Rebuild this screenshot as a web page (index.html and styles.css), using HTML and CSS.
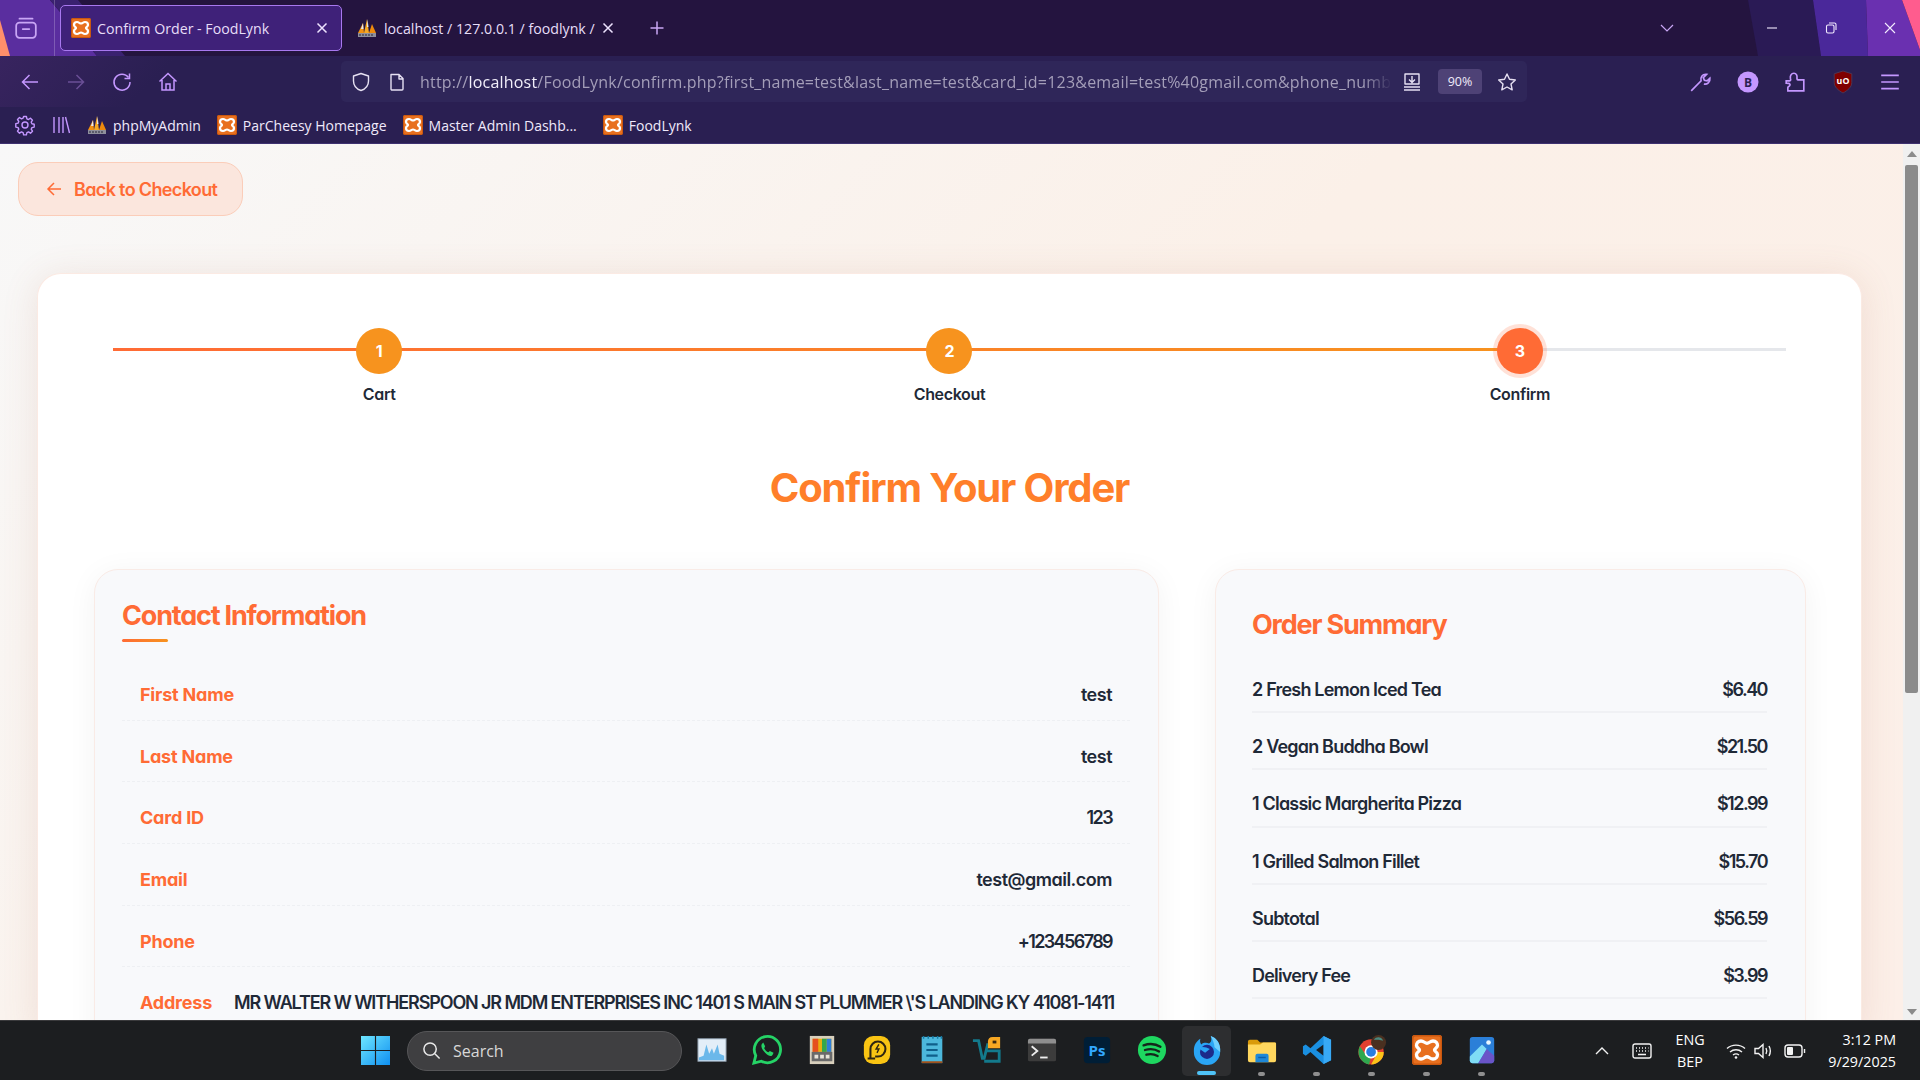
FILE: index.html
```html
<!DOCTYPE html>
<html lang="en">
<head>
<meta charset="utf-8">
<title>Confirm Order - FoodLynk</title>
<link rel="stylesheet" href="styles.css">
</head>
<body>
<svg class="defs" width="0" height="0" aria-hidden="true">
  <symbol id="xampp" viewBox="0 0 20 20">
    <rect width="20" height="20" rx="2" fill="#e8701f"/>
    <rect x=".5" y=".5" width="19" height="19" rx="1.600" fill="none" stroke="#c9570f"/>
    <path d="M6 4C8 4 8.500 5.500 10 5.500S12 4 14 4 17 5.500 17 7 15 9 15 10 17 11.500 17 13 16 16 14 16 11.500 14.500 10 14.500 8 16 6 16 3 14.500 3 13 5 11 5 10 3 8.500 3 7 4 4 6 4Z" fill="none" stroke="#fff" stroke-width="2.200"/>
  </symbol>
  <symbol id="pma" viewBox="0 0 20 20">
    <path d="M1 15 6 5l1 10z" fill="#f29111"/><path d="M7 15 10 1l2 14z" fill="#f7a823"/><path d="M12 15l3-9 4 9z" fill="#ee8a0c"/>
    <path d="M4 11 6 5l.5 6zM10 9l.5-8 1 8z" fill="#e8e8ee"/>
    <rect x="1" y="15" width="18" height="4" fill="#8f8f9c"/>
    <path d="M3 16v2M6 16v2M9 16v2M12 16v2M15 16v2" stroke="#39394a" stroke-width="1.200"/>
  </symbol>
</svg>

<header class="chrome">
  <svg class="theme-art" viewBox="0 0 1920 56" aria-hidden="true">
    <rect width="1920" height="56" fill="#24143f"/>
    <path d="M0 0H50L97 56H0z" fill="#5a2e9f"/>
    <path d="M50 0H78L125 56H97z" fill="#3a2170"/>
    <path d="M0 20 10 56H0z" fill="#ff8f6b"/>
    <path d="M1748 0H1813L1821 56H1758z" fill="#2a1a55"/>
    <path d="M1813 0H1866L1868 56H1821z" fill="#4a289a"/>
    <path d="M1866 0H1902L1920 50V56H1868z" fill="#6a30b0"/>
    <path d="M1902 0H1920V50z" fill="#ff5c8e"/>
  </svg>

  <div class="tabbar">
    <span class="tb-btn side-btn"><svg viewBox="0 0 22 22" class="ico-22"><rect x="2" y="6" width="18" height="14" rx="3"/><path d="M5 2.500h12M8 12h6"/></svg></span>
    <span class="tab-sep"></span>
    <div class="tab tab-active">
      <svg class="fav"><use href="#xampp"/></svg>
      <span class="tab-title">Confirm Order - FoodLynk</span>
      <svg class="tab-x" viewBox="0 0 12 12"><path d="M1.500 1.500l9 9M10.500 1.500l-9 9"/></svg>
    </div>
    <div class="tab tab-idle">
      <svg class="fav"><use href="#pma"/></svg>
      <span class="tab-title">localhost / 127.0.0.1 / foodlynk /</span>
      <svg class="tab-x" viewBox="0 0 12 12"><path d="M1.500 1.500l9 9M10.500 1.500l-9 9"/></svg>
    </div>
    <svg class="tab-plus" viewBox="0 0 16 16"><path d="M8 1.500v13M1.500 8h13"/></svg>
    <svg class="tab-more" viewBox="0 0 14 8"><path d="M1 1l6 6 6-6"/></svg>
    <div class="winctl">
      <svg viewBox="0 0 12 12"><path d="M1 6h10"/></svg>
      <svg viewBox="0 0 12 12"><rect x="1.500" y="3" width="7.500" height="8" rx="1.500"/><path d="M4 1h5.500A1.500 1.500 0 0 1 11 2.500V8"/></svg>
      <svg viewBox="0 0 12 12"><path d="M1 1l10 10M11 1L1 11"/></svg>
    </div>
  </div>

  <div class="toolbar">
    <div class="nav">
      <svg viewBox="0 0 20 20"><path d="M18 10H2.500M9.500 3l-7 7 7 7"/></svg>
      <svg viewBox="0 0 20 20" class="dim"><path d="M2 10h15.500M10.500 3l7 7-7 7"/></svg>
      <svg viewBox="0 0 20 20"><path d="M16.500 5.500A8 8 0 1 0 18 10"/><path d="M17.500 1.500v5h-5" class="solid"/></svg>
      <svg viewBox="0 0 20 20"><path d="M1.500 9.500 10 1.500l8.500 8M4 8v10h12V8M8 18v-6h4v6"/></svg>
    </div>
    <div class="urlbar">
      <svg class="u-ico" viewBox="0 0 20 20"><path d="M10 1.500 17.500 4v5c0 4.500-3 8-7.500 9.500C5.500 17 2.500 13.500 2.500 9V4z"/></svg>
      <svg class="u-ico" viewBox="0 0 20 20"><path d="M4 2.500h8l4 4V17a1 1 0 0 1-1 1H5a1 1 0 0 1-1-1zM12 2.500V7h4"/></svg>
      <span class="url"><span>http://</span><b>localhost</b><span>/FoodLynk/confirm.php?first_name=test&amp;last_name=test&amp;card_id=123&amp;email=test%40gmail.com&amp;phone_numb</span></span>
      <svg class="u-ico" viewBox="0 0 20 20"><path d="M3 2h14v10H3zM10 4v6M7 7.500l3 3 3-3M2 15h16M2 18h16"/></svg>
      <span class="zoom-badge">90%</span>
      <svg class="u-ico" viewBox="0 0 20 20"><path d="M10 2l2.500 5.300 5.800.7-4.300 4 1.200 5.800L10 15l-5.200 2.800L6 12 1.700 8l5.800-.7z"/></svg>
    </div>
    <div class="tools">
      <svg viewBox="0 0 20 20"><path d="M2 18l9-9c-1-3 1-6.500 5-6l-3 3 1 2.500 2.500.5 2.500-2.500c.5 3.500-2.500 6-5.500 5.300" /></svg>
      <svg viewBox="0 0 22 22"><circle cx="11" cy="11" r="10.500" class="fill"/><text x="11" y="15.500" class="b-letter">B</text></svg>
      <svg viewBox="0 0 20 20"><path d="M2 9h3c1.500 0 1-1.500.8-2.500C5.500 4.500 6.500 2 9 2s3 2.500 2.800 4c-.1 1 0 2 1 2H18v10H3.500v-3c0-1 2-1 2-2.500S4 11 2 11z"/></svg>
      <svg viewBox="0 0 20 20" class="ublock"><path d="M10 0l8 2.500v8c0 4-3.500 7-8 9.500-4.500-2.500-8-5.500-8-9.500v-8z"/><text x="10" y="12">uO</text></svg>
      <svg viewBox="0 0 20 20"><path d="M2 4h16M2 10h16M2 16h16"/></svg>
    </div>
  </div>

  <div class="bookmarks">
    <svg class="bm-tool" viewBox="0 0 20 20"><circle cx="10" cy="10" r="3"/><path d="M8.600 1.500h2.800l.5 2.300 1.600.7 2-1.300 2 2-1.300 2 .7 1.600 2.300.5v2.800l-2.300.5-.7 1.600 1.300 2-2 2-2-1.300-1.600.7-.5 2.300H8.600l-.5-2.300-1.600-.7-2 1.300-2-2 1.300-2-.7-1.600-2.300-.5V8.600l2.300-.5.7-1.600-1.300-2 2-2 2 1.300 1.600-.7z"/></svg>
    <svg class="bm-tool lib" viewBox="0 0 20 20"><path d="M3 2v16M8 2v16M12 2v16M14.500 2l4 16"/></svg>
    <span class="bm bm-a"><svg class="fav"><use href="#pma"/></svg>phpMyAdmin</span>
    <span class="bm"><svg class="fav"><use href="#xampp"/></svg>ParCheesy Homepage</span>
    <span class="bm bm-c"><svg class="fav"><use href="#xampp"/></svg>Master Admin Dashb...</span>
    <span class="bm"><svg class="fav"><use href="#xampp"/></svg>FoodLynk</span>
  </div>
</header>

<div class="viewport">
  <main class="page">
    <a class="back"><svg viewBox="0 0 16 16"><path d="M15 8H2M8 2 2 8l6 6"/></svg>Back to Checkout</a>
    <section class="card">
      <div class="stepper">
        <span class="line"></span>
        <span class="line-fill"></span>
        <div class="step"><span class="dot">1</span><span class="step-label">Cart</span></div>
        <div class="step"><span class="dot">2</span><span class="step-label">Checkout</span></div>
        <div class="step"><span class="dot dot-now">3</span><span class="step-label">Confirm</span></div>
      </div>
      <h1 class="title">Confirm Your Order</h1>
      <div class="columns">
        <div class="panel contact">
          <h2 class="contact-title">Contact Information</h2>
          <div class="row"><span class="k">First Name</span><span class="v">test</span></div>
          <div class="row"><span class="k">Last Name</span><span class="v">test</span></div>
          <div class="row"><span class="k">Card ID</span><span class="v tight">123</span></div>
          <div class="row"><span class="k">Email</span><span class="v">test@gmail.com</span></div>
          <div class="row"><span class="k">Phone</span><span class="v tight">+123456789</span></div>
          <div class="row"><span class="k">Address</span><span class="v caps">MR WALTER W WITHERSPOON JR MDM ENTERPRISES INC 1401 S MAIN ST PLUMMER \'S LANDING KY 41081-1411</span></div>
        </div>
        <div class="panel summary">
          <h2 class="summary-title">Order Summary</h2>
          <div class="line-item"><span>2 Fresh Lemon Iced Tea</span><span class="price">$6.40</span></div>
          <div class="line-item"><span>2 Vegan Buddha Bowl</span><span class="price">$21.50</span></div>
          <div class="line-item"><span>1 Classic Margherita Pizza</span><span class="price">$12.99</span></div>
          <div class="line-item"><span>1 Grilled Salmon Fillet</span><span class="price">$15.70</span></div>
          <div class="line-item"><span>Subtotal</span><span class="price">$56.59</span></div>
          <div class="line-item"><span>Delivery Fee</span><span class="price">$3.99</span></div>
        </div>
      </div>
    </section>
  </main>
  <div class="scrollbar">
    <span class="sb-up"></span>
    <span class="sb-thumb"></span>
    <span class="sb-down"></span>
  </div>
</div>

<footer class="taskbar">
  <svg class="win" viewBox="0 0 30 30"><defs><linearGradient id="wg" x1="0" y1="0" x2="1" y2="1"><stop offset="0" stop-color="#6ee6ff"/><stop offset="1" stop-color="#0f8ff0"/></linearGradient></defs><path d="M0 0h14.400v14.400H0zM15.600 0H30v14.400H15.600zM0 15.600h14.400V30H0zM15.600 15.600H30V30H15.600z" fill="url(#wg)"/></svg>
  <div class="search"><svg viewBox="0 0 20 20"><circle cx="8.500" cy="8.500" r="6.500"/><path d="M13.500 13.500l5 5"/></svg><span>Search</span></div>
  <div class="apps">
    <span class="app"><svg viewBox="0 0 32 32"><rect x="1" y="4" width="30" height="24" fill="#e3eef8" stroke="#8a99a8"/><path d="M2 24 7 22l3-12 3 10 3-6 2 6 4-10 2 10 5 2v5H2z" fill="#6bb8ea"/></svg></span>
    <span class="app"><svg viewBox="0 0 32 32"><path d="M2 30l2-8A14 14 0 1 1 10 28z" fill="none" stroke="#25d366" stroke-width="3"/><path d="M11 9c-2 2-1 6 3 10s7 4 8 2l1-2-4-2-1.500 1.500c-2-1-3.500-2.500-4.500-4.500L14 12l-2-4z" fill="#25d366"/></svg></span>
    <span class="app"><svg viewBox="0 0 32 32"><rect x="3" y="1" width="26" height="30" fill="#d8d0bd"/><rect x="6" y="4" width="20" height="14" fill="#e8b010"/><rect x="6" y="4" width="6" height="14" fill="#e5501f"/><rect x="16" y="4" width="5" height="14" fill="#35a84a"/><rect x="21" y="4" width="5" height="14" fill="#2f7fd8"/><rect x="5" y="18" width="22" height="10" fill="#6a6a6a"/><path d="M8 21h4v4H8zM14 21h4v4h-4zM20 21h4v4h-4z" fill="#e8e4da"/></svg></span>
    <span class="app"><svg viewBox="0 0 32 32"><rect x="2" y="1" width="28" height="30" rx="10" fill="#f9c413"/><path d="M9 25V15a8 8 0 1 1 8 8h-3M6 25h8" fill="none" stroke="#2e2412" stroke-width="2.200"/><path d="M18 10l-3 5h3l-2 4" fill="none" stroke="#2e2412" stroke-width="1.500"/></svg></span>
    <span class="app"><svg viewBox="0 0 32 32"><rect x="5" y="2" width="22" height="28" fill="#4cb8dc"/><rect x="5" y="28" width="22" height="2" fill="#a0521c"/><path d="M10 10h12M10 16h12M10 22h12" stroke="#0f5f8a" stroke-width="2.200"/><path d="M7 1v3M12 1v3M17 1v3M22 1v3M26 1v3" stroke="#157aa5" stroke-width="1.500"/></svg></span>
    <span class="app"><svg viewBox="0 0 32 32"><path d="M1 6H7L11 25H13L17 9" fill="none" stroke="#137a8c" stroke-width="3"/><path d="M15 17H29V28H13" fill="none" stroke="#137a8c" stroke-width="3"/><path d="M17 14V7Q17 2 22 2H30V14z" fill="#f7a823"/><rect x="22" y="6" width="4" height="3" fill="#3a2a10"/></svg></span>
    <span class="app"><svg viewBox="0 0 32 32"><rect x="1" y="4" width="30" height="24" rx="2" fill="#3c3c3c"/><path d="M1 6a2 2 0 0 1 2-2h26a2 2 0 0 1 2 2v3H1z" fill="#8f8f8f"/><path d="M5 12l6 5-6 5" fill="none" stroke="#eee" stroke-width="2"/><path d="M14 24h8" stroke="#eee" stroke-width="2"/></svg></span>
    <span class="app"><svg viewBox="0 0 32 32"><rect x="2" y="2" width="28" height="28" rx="4" fill="#001e36"/><text x="16" y="22.500" class="ps">Ps</text></svg></span>
    <span class="app"><svg viewBox="0 0 32 32"><circle cx="16" cy="16" r="15" fill="#1ed760"/><path d="M7 11c6-2 13-1.500 18 1.500M8.500 16c5-1.500 11-1 15 1.500M10 21c4-1 8.500-.6 12 1.300" fill="none" stroke="#14261b" stroke-width="2.500" stroke-linecap="round"/></svg></span>
    <span class="app app-on"><svg viewBox="0 0 32 32"><path d="M2 16C2 11 5 6 9 4c-1 3 0 5 1 6 2-2 6-2 8-1 3-1 3-5 2-8 6 2 11 8 10 17a14 14 0 0 1-28 0z" fill="#2aa5f5"/><path d="M20 1c6 2 11 8 10 17l-6-5c0-4-2-8-4-12z" fill="#6fd0ff"/><circle cx="16" cy="18" r="7.500" fill="#1c2a8a"/><path d="M7 14c4-2 8-1 12 1l-5 4z" fill="#2aa5f5"/></svg></span>
    <span class="app"><svg viewBox="0 0 32 32"><path d="M1 7a2 2 0 0 1 2-2h8l3 3h16v4H1z" fill="#d99a0b"/><path d="M1 10h13l3-2h13a1 1 0 0 1 1 1v18a2 2 0 0 1-2 2H3a2 2 0 0 1-2-2z" fill="#ffd75e"/><path d="M9 29v-7a2 2 0 0 1 2-2h10a2 2 0 0 1 2 2v7z" fill="#1e88d8"/><path d="M12 24h8" stroke="#0b5fa8" stroke-width="1.500"/></svg></span>
    <span class="app"><svg viewBox="0 0 32 32"><path d="M23 1 31 5V27L23 31 9 18 4 22 1 20V12L4 10 9 14zM23 10 15 16l8 6z" fill="#1a8fe0"/><path d="M23 1 31 5V27L23 31z" fill="#38a9f5"/></svg></span>
    <span class="app"><svg viewBox="0 0 32 32"><circle cx="15" cy="18" r="13.500" fill="#e3402f"/><path d="M15 18h13.500A13.500 13.500 0 0 1 15 31.500l5-9z" fill="#fcc419"/><path d="M3 12l7 10h5l-2 9.400A13.500 13.500 0 0 1 3 12z" fill="#2fa84f"/><circle cx="15" cy="18" r="7" fill="#fff"/><circle cx="15" cy="18" r="5.200" fill="#2a7de1"/><circle cx="23" cy="8" r="8" fill="#4a3020"/><path d="M18 5c3-4 8-3 10 1-3-1-7-1-10-1z" fill="#4a8a80"/></svg></span>
    <span class="app"><svg viewBox="0 0 32 32"><use href="#xampp"/></svg></span>
    <span class="app"><svg viewBox="0 0 32 32"><rect x="3" y="2" width="26" height="28" rx="3" fill="#2b7fd8"/><path d="M3 23 16 10l5 5-9 15H6a3 3 0 0 1-3-3z" fill="#7fdcf5"/><path d="M12 30l9-15 8 7v5a3 3 0 0 1-3 3z" fill="#6a54c8"/><circle cx="23" cy="8" r="2.500" fill="#e9f7ff"/></svg></span>
  </div>
  <div class="tray">
    <svg class="t-chev" viewBox="0 0 14 8"><path d="M1 7l6-6 6 6"/></svg>
    <svg class="t-kb" viewBox="0 0 20 16"><rect x="1" y="1" width="18" height="14" rx="2"/><path d="M4 5h1M7 5h1M10 5h1M13 5h1M16 5h.5M4 8h1M7 8h1M10 8h1M13 8h1M16 8h.5M6 11.500h8"/></svg>
    <div class="lang"><span>ENG</span><span>BEP</span></div>
    <svg class="t-wifi" viewBox="0 0 20 16"><path d="M1 5.500c5-4.500 13-4.500 18 0M4 9c3.500-3 8.500-3 12 0M7 12c2-1.500 4-1.500 6 0"/><circle cx="10" cy="14.500" r="1.300" class="fill-w"/></svg>
    <svg class="t-vol" viewBox="0 0 20 16"><path d="M1 5.500h3.500L9 1.500v13l-4.500-4H1zM12 5c1 2 1 4 0 6M15 3c1.600 3 1.600 7 0 10"/></svg>
    <svg class="t-bat" viewBox="0 0 22 14"><rect x="1" y="1" width="17" height="12" rx="3"/><rect x="3" y="3" width="6" height="8" rx="1" class="fill-w"/><path d="M20.500 5v4"/></svg>
    <div class="clock"><span>3:12 PM</span><span>9/29/2025</span></div>
  </div>
</footer>
</body>
</html>
```

FILE: styles.css
```css
* { box-sizing: border-box; }
html, body { margin: 0; height: 100%; overflow: hidden; }
body {
  display: flex;
  flex-direction: column;
  height: 1080px;
  font-family: "Inter", "Liberation Sans", sans-serif;
  background: #fff;
}
.defs { position: absolute; }
svg { display: block; flex: none; overflow: visible; }

/* browser chrome */
.chrome {
  position: relative;
  height: 144px;
  flex: none;
  background: #2a1f52;
  border-bottom: 1px solid #3e3170;
  font-family: "Open Sans", "Noto Sans", sans-serif;
  overflow: hidden;
}
.theme-art { position: absolute; left: 0; top: 0; width: 1920px; height: 56px; }
.tabbar {
  position: relative;
  display: flex;
  align-items: center;
  height: 56px;
}
.tb-btn { width: 54px; display: flex; justify-content: center; padding-right: 2px; }
.ico-22 { width: 24px; height: 24px; fill: none; stroke: #c9a6f5; stroke-width: 1.600; stroke-linecap: round; }
.tab-sep { width: 1px; height: 56px; background: rgba(255,255,255,.22); }
.tab {
  display: flex;
  align-items: center;
  height: 46px;
  color: #e7def8;
  font-size: 14.200px;
  white-space: nowrap;
}
.tab-active {
  width: 282px;
  margin-left: 5px;
  padding: 0 13px 0 10px;
  background: #3f2179;
  border: 1px solid #a878ef;
  border-radius: 5px;
}
.tab-idle { width: 280px; margin-left: 5px; padding: 0 0 0 10px; }
.fav { width: 20px; height: 20px; }
.tab-title { margin-left: 6px; flex: 1; overflow: hidden; }
.tab-idle .tab-title { margin-left: 7px; }
.tab-x { width: 12px; height: 12px; fill: none; stroke: #eee4ff; stroke-width: 1.500; }
.tab-idle .tab-x { margin-right: 13px; }
.tab-plus { width: 16px; height: 16px; margin-left: 22px; fill: none; stroke: #c9a6f5; stroke-width: 1.500; }
.tab-more { width: 14px; height: 8px; margin-left: 995px; fill: none; stroke: #c9a6f5; stroke-width: 1.200; }
.winctl { display: flex; gap: 47px; margin-left: 92px; align-items: center; }
.winctl svg { width: 12px; height: 12px; fill: none; stroke: #f3ecff; stroke-width: 1.100; }

.toolbar {
  position: relative;
  display: flex;
  align-items: center;
  height: 51px;
  background: linear-gradient(135deg, #38245f 0, #2a1f52 9%);
}
.nav { display: flex; gap: 26px; width: 341px; padding-left: 20px; }
.nav svg { width: 20px; height: 20px; fill: none; stroke: #c497ff; stroke-width: 1.500; }
.nav .dim { stroke: #6a4f96; }
.urlbar {
  display: flex;
  align-items: center;
  width: 1186px;
  height: 41px;
  padding: 0 10px 0 10px;
  background: #2f2659;
  border-radius: 5px;
}
.u-ico { width: 20px; height: 20px; fill: none; stroke: #e6e0f2; stroke-width: 1.400; stroke-linejoin: round; }
.urlbar .u-ico:nth-child(2) { margin-left: 16px; }
.url {
  flex: 1;
  margin: 0 10px 0 13px;
  overflow: hidden;
  white-space: nowrap;
  font-size: 16px;
  letter-spacing: .21px;
  color: #a49eb9;
  -webkit-mask-image: linear-gradient(90deg, #000 97%, transparent);
  mask-image: linear-gradient(90deg, #000 97%, transparent);
}
.url b { font-weight: 400; color: #f2effa; }
.zoom-badge {
  width: 44px;
  height: 25px;
  margin: 0 15px 0 16px;
  display: flex;
  align-items: center;
  justify-content: center;
  background: #4e4276;
  border-radius: 4px;
  color: #f0ecfa;
  font-size: 12.500px;
}
.tools { display: flex; align-items: center; margin-left: 162px; gap: 25.500px; }
.tools svg { width: 22px; height: 22px; fill: none; stroke: #c497ff; stroke-width: 1.500; }
.tools .fill { fill: #c497ff; stroke: none; }
.b-letter { font: 700 12px "Open Sans", sans-serif; text-anchor: middle; fill: #2a1f52; stroke: none; }
.tools .ublock path { fill: #800000; stroke: #4a3a5a; stroke-width: .8; }
.ublock text { font: 700 8px "Open Sans", sans-serif; text-anchor: middle; fill: #fff; stroke: none; }

.bookmarks {
  position: relative;
  display: flex;
  align-items: center;
  height: 36px;
  padding-left: 15px;
  background: #2a1f52;
  color: #efe9fb;
  font-size: 14px;
  white-space: nowrap;
}
.bm-tool { width: 20px; height: 20px; fill: none; stroke: #c497ff; stroke-width: 1.400; stroke-linejoin: round; }
.lib { margin-left: 16px; }
.bm { display: flex; align-items: center; gap: 6px; margin-left: 16px; }
.bm-c { margin-right: 10px; }

/* page */
.viewport {
  flex: 1;
  display: flex;
  min-height: 0;
  overflow: hidden;
  background: linear-gradient(135deg, #f8f8f8 0%, #fbf0e8 50%, #fcefe8 100%);
}
.page { flex: 1; min-width: 0; padding: 18px 41px 0 37px; overflow: hidden; }
.back {
  display: flex;
  align-items: center;
  gap: 12px;
  width: 225px;
  height: 54px;
  margin: 0 0 57px -19px;
  padding-left: 27px;
  background: #fbe6dd;
  border: 1px solid #fbcdb9;
  border-radius: 20px;
  color: #ff6b35;
  font-weight: 600;
  font-size: 18px;
  letter-spacing: -.65px;
  font-feature-settings: "cv11";
}
.back svg { width: 16px; height: 16px; fill: none; stroke: #ff6b35; stroke-width: 1.500; }
.card {
  background: #fff;
  border: 1px solid #fbeae3;
  border-bottom: 0;
  border-radius: 24px 24px 0 0;
  padding: 54px 56px 0;
  height: 760px;
  font-feature-settings: "cv11";
  box-shadow: 0 4px 36px rgba(170,100,70,.14);
}
.stepper { position: relative; display: grid; grid-template-columns: repeat(3, 1fr); }
.line { position: absolute; left: 19px; right: 19px; top: 20px; height: 3px; background: #e5e7eb; }
.line-fill { position: absolute; left: 19px; width: 1426px; top: 20px; height: 3px; background: linear-gradient(90deg, #ff6b35, #f7931e); }
.step { position: relative; display: flex; flex-direction: column; align-items: center; }
.dot {
  width: 46px;
  height: 46px;
  border-radius: 50%;
  display: flex;
  align-items: center;
  justify-content: center;
  background: #f7931e;
  color: #fff;
  font-weight: 700;
  font-size: 16px;
}
.dot-now { background: #ff6b35; box-shadow: 0 0 0 4px rgba(255,107,53,.2); }
.step-label {
  margin-top: 10px;
  color: #1f2937;
  font-weight: 600;
  font-size: 16px;
  line-height: 20px;
  letter-spacing: -.35px;
}
.title {
  margin: 60px 0 0;
  text-align: center;
  color: #ff7f2a;
  font-size: 40px;
  line-height: 48px;
  font-weight: 700;
  letter-spacing: -1.150px;
}
.columns { display: grid; grid-template-columns: 1065px 591px; gap: 56px; margin-top: 57px; min-height: 620px; }
.panel {
  background: #f8f9fb;
  border: 1px solid #f9ebe6;
  border-radius: 24px;
  box-shadow: 0 4px 30px rgba(0,0,0,.05);
}
.contact { padding: 28px 28px 0 27px; }
.contact-title, .summary-title {
  margin: 0;
  color: #ff6b35;
  font-weight: 700;
  font-size: 27px;
  line-height: 36px;
  letter-spacing: -1.200px;
}
.contact-title { position: relative; padding-bottom: 25px; }
.contact-title::after {
  content: "";
  position: absolute;
  left: 0;
  bottom: 17px;
  width: 46px;
  height: 3px;
  border-radius: 2px;
  background: linear-gradient(90deg, #ff6b35, #f7931e);
}
.row {
  display: flex;
  justify-content: space-between;
  align-items: center;
  gap: 22px;
  height: 61.700px;
  padding: 10px 18px 0;
  border-bottom: 1px dashed #eef0f3;
  font-size: 18px;
  letter-spacing: -.5px;
  white-space: nowrap;
}
.row .k { color: #ff6b35; font-weight: 700; letter-spacing: -.2px; }
.row .v { color: #1f2937; font-weight: 600; }
.row .tight { letter-spacing: -1.600px; }
.row .caps { letter-spacing: -1.130px; }
.summary { padding: 37px 38px 0 36px; }
.summary-title { margin-bottom: 13px; }
.line-item {
  display: flex;
  justify-content: space-between;
  align-items: center;
  height: 57.200px;
  padding-top: 12px;
  border-bottom: 2px solid #f0f1f4;
  color: #1f2937;
  font-weight: 600;
  font-size: 18px;
  letter-spacing: -.8px;
}
.price { letter-spacing: -1.500px; }

.scrollbar {
  flex: none;
  width: 17px;
  display: flex;
  flex-direction: column;
  align-items: center;
  background: #f0f0f0;
}
.sb-up { margin-top: 7px; border: 5px solid transparent; border-top: 0; border-bottom: 6px solid #8b8b8b; }
.sb-thumb { width: 13px; height: 528px; margin-top: 8px; background: #8b8b8b; border-radius: 2px; }
.sb-down { margin-top: auto; margin-bottom: 5px; border: 5px solid transparent; border-bottom: 0; border-top: 6px solid #8b8b8b; }

/* taskbar */
.taskbar {
  flex: none;
  position: relative;
  display: flex;
  align-items: center;
  height: 60px;
  padding-left: 361px;
  background: #1c1e20;
  border-top: 1px solid #3a3a3c;
  font-family: "Open Sans", "Noto Sans", sans-serif;
  color: #fff;
}
.win { width: 29px; height: 29px; }
.search {
  display: flex;
  align-items: center;
  gap: 12px;
  width: 275px;
  height: 40px;
  margin-left: 17px;
  padding-left: 14px;
  background: #3f3f41;
  border: 1px solid #565658;
  border-radius: 20px;
  color: #d8d8d8;
  font-size: 16px;
}
.search svg { width: 19px; height: 19px; fill: none; stroke: #e8e8e8; stroke-width: 1.600; }
.apps { display: flex; margin-left: 2px; }
.app {
  position: relative;
  width: 55px;
  height: 50px;
  display: flex;
  align-items: center;
  justify-content: center;
  padding-bottom: 2px;
}
.app svg { width: 30px; height: 30px; }
.app:nth-child(n+11)::after {
  content: "";
  position: absolute;
  bottom: 0;
  left: 24px;
  width: 7px;
  height: 4px;
  border-radius: 2px;
  background: #8f8f8f;
}
.app-on { width: 49px; margin: 0 3px; background: #2d2e30; border-radius: 5px; }
.app-on::after {
  content: "";
  position: absolute;
  bottom: 1px;
  left: 15px;
  width: 19px;
  height: 4px;
  border-radius: 2px;
  background: #4fc3f7;
}
.tray { display: flex; align-items: center; margin-left: 86px; }
.tray svg { fill: none; stroke: #f2f2f2; stroke-width: 1.400; }
.t-chev { width: 14px; height: 8px; }
.t-kb { width: 20px; height: 16px; margin-left: 23px; }
.lang {
  display: flex;
  flex-direction: column;
  align-items: center;
  margin-left: 20px;
  width: 36px;
  font-size: 14.300px;
  line-height: 22px;
}
.t-wifi { width: 20px; height: 16px; margin-left: 18px; }
.t-vol { width: 20px; height: 16px; margin-left: 8px; }
.t-bat { width: 22px; height: 14px; margin-left: 10px; }
.tray .fill-w { fill: #f2f2f2; stroke: none; }
.clock {
  display: flex;
  flex-direction: column;
  align-items: flex-end;
  width: 78px;
  margin-left: 12px;
  font-size: 14.300px;
  line-height: 22px;
}
.ps { font: 700 16px "Open Sans", sans-serif; text-anchor: middle; fill: #31a8ff; }
```
